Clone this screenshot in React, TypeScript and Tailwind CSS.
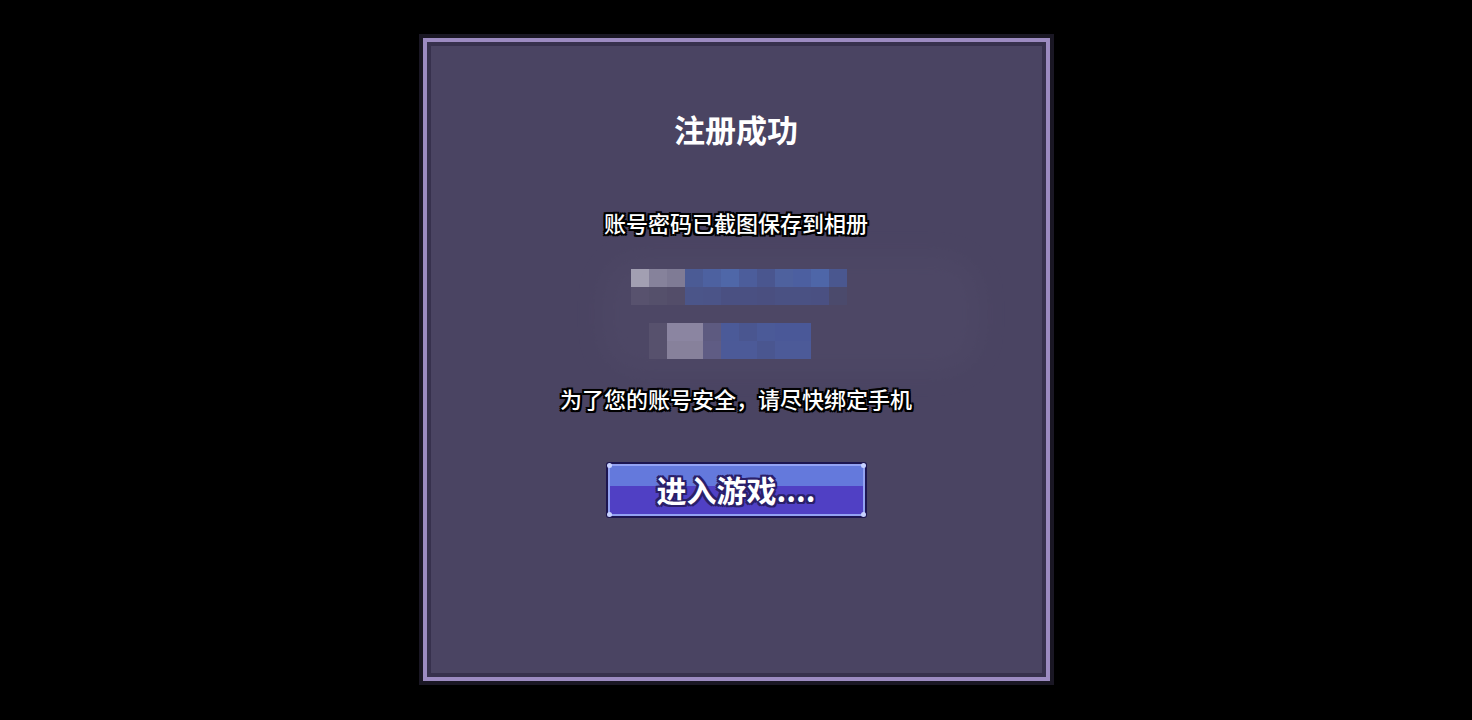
const outline =
  '[text-shadow:2px_0_0_#000,-2px_0_0_#000,0_2px_0_#000,0_-2px_0_#000,2px_2px_0_#000,-2px_-2px_0_#000,2px_-2px_0_#000,-2px_2px_0_#000,0_0_3px_#000]';

const row1Top = ['#a29fb2', '#86829b', '#7f7b95', '#4b5b95', '#4d61a0', '#4f67a8', '#4c5d9b', '#4a568f', '#4e619e', '#4c5fa0', '#4e66a8', '#4a578f'];
const row1Bottom = ['#58526e', '#55506b', '#534d69', '#4b5589', '#4b5488', '#4a5082', '#4a5082', '#4a4f80', '#4a5183', '#4a5183', '#4a5082', '#4b4a6c'];
const row2Top = ['#57516d', '#8b85a1', '#8b85a1', '#5d5a80', '#4b5a98', '#4a5690', '#4b5a98', '#4a5898', '#4a5898'];
const row2Bottom = ['#57516d', '#87819b', '#87819b', '#5f5c84', '#4c5a98', '#4c5a98', '#4a5690', '#4c5a98', '#4c5a98'];

function PixelRow({ colors }: { colors: string[] }) {
  return (
    <div className="flex">
      {colors.map((c, i) => (
        <div key={i} className="w-[18px] h-[18px]" style={{ backgroundColor: c }} />
      ))}
    </div>
  );
}

export default function App() {
  return (
    <div className="min-h-[720px] w-full bg-black pt-[34px] font-['Noto_Sans_CJK_SC','Noto_Sans',sans-serif]">
      {/* Frame */}
      <div className="mx-auto w-[635px] h-[651px] border-4 border-[#1a1724] bg-[#9c8bc1] p-[4px]">
        <div className="w-full h-full border-4 border-[#37314d] bg-[#4a4462] flex flex-col items-center">
          <h1 className="mt-[63px] text-[31px] leading-[40px] font-bold text-white">注册成功</h1>

          <p className={`mt-[58px] text-[22px] leading-[30px] font-medium text-white ${outline}`}>
            账号密码已截图保存到相册
          </p>

          {/* Blurred credentials */}
          <div className="relative mt-[32px] w-[216px] ml-[6px]">
            <div className="absolute -left-[30px] -top-[14px] w-[380px] h-[118px] rounded-[40px] bg-[#524c6a] opacity-40 blur-md" />
            <div className="relative">
              <PixelRow colors={row1Top} />
              <PixelRow colors={row1Bottom} />
              <div className="mt-[18px] ml-[18px]">
                <PixelRow colors={row2Top} />
                <PixelRow colors={row2Bottom} />
              </div>
            </div>
          </div>

          <p className={`mt-[24px] text-[22px] leading-[30px] font-medium text-white ${outline}`}>
            为了您的账号安全，请尽快绑定手机
          </p>

          {/* Button */}
          <button className="mt-[49px] w-[261px] h-[56px] rounded-[3px] border-2 border-[#1d1650] bg-[#1d1650] cursor-pointer">
            <div className="relative w-full h-full border-2 border-[#93a2f2] bg-[linear-gradient(#6479dc_0_42%,#5040c4_42%)] flex items-center justify-center">
              <span className="absolute -left-[3px] -top-[3px] w-[5px] h-[5px] rounded-full bg-[#c8d2ff]" />
              <span className="absolute -right-[3px] -top-[3px] w-[5px] h-[5px] rounded-full bg-[#c8d2ff]" />
              <span className="absolute -left-[3px] -bottom-[3px] w-[5px] h-[5px] rounded-full bg-[#c8d2ff]" />
              <span className="absolute -right-[3px] -bottom-[3px] w-[5px] h-[5px] rounded-full bg-[#c8d2ff]" />
              <span className="text-[30px] leading-none font-bold text-white pb-[2px] [text-shadow:2px_0_0_#2a1f6a,-2px_0_0_#2a1f6a,0_2px_0_#2a1f6a,0_-2px_0_#2a1f6a,2px_2px_0_#2a1f6a,-2px_-2px_0_#2a1f6a,2px_-2px_0_#2a1f6a,-2px_2px_0_#2a1f6a]">
                进入游戏....
              </span>
            </div>
          </button>
        </div>
      </div>
    </div>
  );
}
